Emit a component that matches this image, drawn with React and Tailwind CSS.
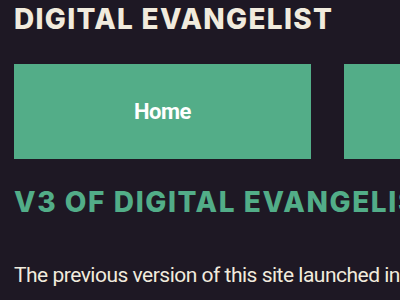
import React from "react";

export default function App() {
  return (
    <div className="h-[300px] w-[400px] overflow-hidden bg-[#1e1824] pl-[14px]">
      <h1 className="pt-[4px] font-['Inter',sans-serif] text-[28px] font-extrabold leading-[30px] tracking-[1.3px] whitespace-nowrap text-[#f1ebdd]">
        DIGITAL EVANGELIST
      </h1>
      <nav className="mt-[30px] flex gap-[33px]">
        <a className="flex h-[95px] w-[297px] shrink-0 items-center justify-center bg-[#53ad88] font-['Roboto',sans-serif] text-[22px] font-bold tracking-[-0.5px] text-white">
          Home
        </a>
        <a className="h-[95px] w-[297px] shrink-0 bg-[#53ad88]" />
      </nav>
      <h2 className="mt-[28px] font-['Inter',sans-serif] text-[28px] font-extrabold leading-[30px] tracking-[1.6px] whitespace-nowrap text-[#52ad88]">
        V3 OF DIGITAL EVANGELIST
      </h2>
      <p className="mt-[44px] font-['Roboto',sans-serif] text-[21px] leading-[28px] tracking-[-0.5px] whitespace-nowrap text-[#f1ebdd]">
        The previous version of this site launched in 2011
      </p>
    </div>
  );
}
